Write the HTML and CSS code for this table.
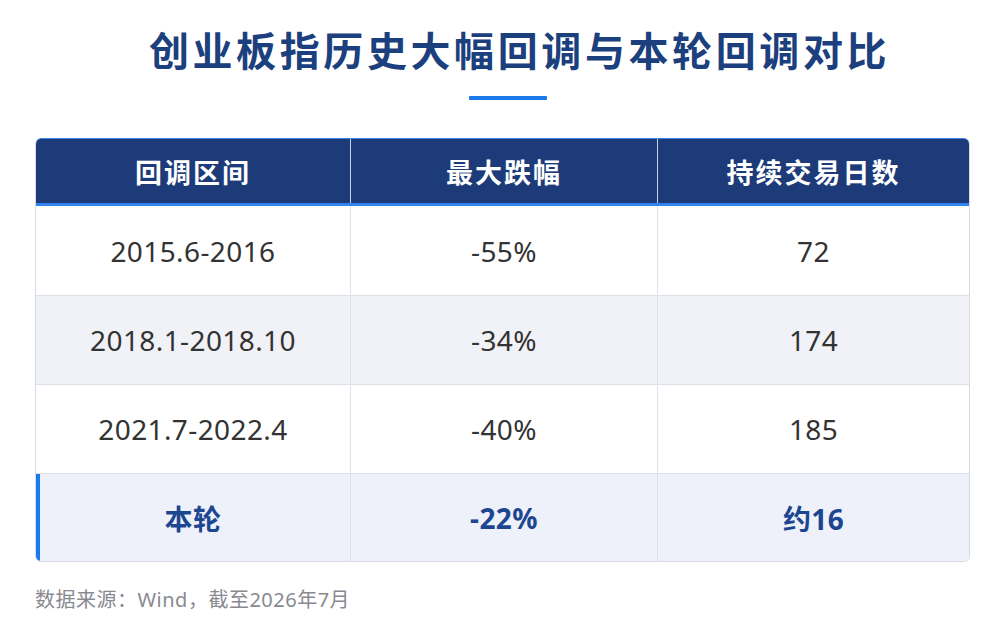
FILE: index.html
```html
<!DOCTYPE html>
<html lang="zh-CN">
<head>
<meta charset="utf-8">
<title>创业板指历史大幅回调与本轮回调对比</title>
<link rel="stylesheet" href="styles.css">
</head>
<body>
<div class="page">
  <h1 class="title">创业板指历史大幅回调与本轮回调对比</h1>
  <div class="title-bar"></div>
  <div class="table">
    <div class="row head">
      <div class="cell">回调区间</div>
      <div class="cell">最大跌幅</div>
      <div class="cell">持续交易日数</div>
    </div>
    <div class="row">
      <div class="cell">2015.6-2016</div>
      <div class="cell">-55%</div>
      <div class="cell">72</div>
    </div>
    <div class="row alt">
      <div class="cell">2018.1-2018.10</div>
      <div class="cell">-34%</div>
      <div class="cell">174</div>
    </div>
    <div class="row">
      <div class="cell">2021.7-2022.4</div>
      <div class="cell">-40%</div>
      <div class="cell">185</div>
    </div>
    <div class="row current">
      <div class="cell">本轮</div>
      <div class="cell">-22%</div>
      <div class="cell">约16</div>
    </div>
  </div>
  <p class="source">数据来源：Wind，截至2026年7月</p>
</div>
</body>
</html>
```
FILE: styles.css
```css
* { box-sizing: border-box; }
html, body { margin: 0; padding: 0; background: #ffffff; }
body {
  font-family: "Noto Sans", "Noto Sans CJK SC", sans-serif;
  color: #333333;
}
.page {
  width: 1007px;
  padding: 21px 37px 0 35px;
  display: flex;
  flex-direction: column;
  align-items: center;
}
.title {
  margin: 0;
  padding-left: 34px;
  font-size: 40px;
  line-height: 56px;
  font-weight: 700;
  letter-spacing: 3.6px;
  color: #1c3f7e;
  font-family: "Noto Sans CJK SC", sans-serif;
}
.title-bar {
  width: 78px;
  height: 4px;
  margin-top: 19px;
  margin-left: 10px;
  background: #1a78ea;
  border-radius: 1px;
}
.table {
  margin-top: 38px;
  width: 935px;
  border: 1px solid #d6dbe7;
  border-top: none;
  border-radius: 6px;
  overflow: hidden;
}
.row {
  display: grid;
  grid-template-columns: 314px 307px 1fr;
  height: 89px;
  border-top: 1px solid #dde1ea;
  background: #ffffff;
}
.cell {
  display: flex;
  align-items: center;
  justify-content: center;
  font-size: 28px;
  letter-spacing: 0.4px;
  color: #333333;
}
.cell + .cell { border-left: 1px solid #dde1ea; }
.row.head {
  height: 68px;
  background: #1c3b78;
  border: 1px solid #3a82ee;
  border-bottom: 3px solid #2f84f0;
  border-radius: 6px 6px 0 0;
  margin: 0 -1px;
}
.row.head .cell {
  color: #ffffff;
  font-weight: 700;
  font-size: 27px;
  letter-spacing: 2px;
  font-family: "Noto Sans CJK SC", sans-serif;
}
.row.head .cell + .cell { border-left: 1px solid #c8d3ea; }
.row.head + .row { border-top: none; }
.row.alt { background: #f1f2f7; }
.row.current {
  height: 88px;
  background: #eef1fa;
  box-shadow: inset 4px 0 0 #1a7bf0;
}
.row.current .cell {
  font-weight: 700;
  color: #1d4690;
}
.source {
  align-self: flex-start;
  margin: 22px 0 0;
  font-size: 20px;
  letter-spacing: 0.5px;
  color: #888a90;
}
```
